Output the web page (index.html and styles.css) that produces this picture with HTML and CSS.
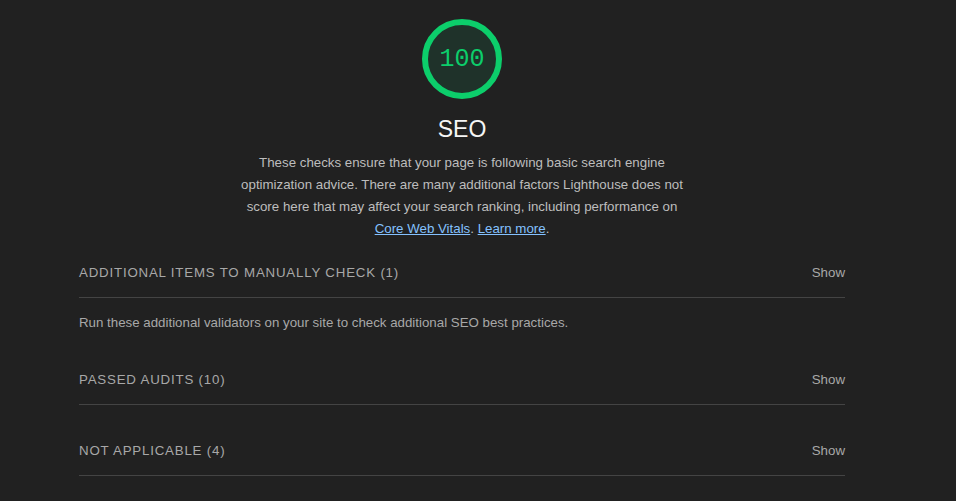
FILE: index.html
```html
<!DOCTYPE html>
<html>
<head>
<meta charset="utf-8">
<link rel="stylesheet" href="styles.css">
</head>
<body>
<div class="report">
  <div class="category-header">
    <div class="gauge">
      <svg class="gauge-svg" width="84" height="84" viewBox="0 0 84 84">
        <circle cx="42" cy="42" r="37" fill="#1f322a" stroke="#0cce6b" stroke-width="6"/>
      </svg>
      <div class="gauge-value">100</div>
    </div>
    <h1 class="category-title">SEO</h1>
    <p class="category-desc">These checks ensure that your page is following basic search engine optimization advice. There are many additional factors Lighthouse does not score here that may affect your search ranking, including performance on <a href="#">Core Web Vitals</a>. <a href="#">Learn more</a>.</p>
  </div>

  <div class="group group-manual">
    <div class="group-header">
      <span class="group-title">Additional items to manually check (1)</span>
      <span class="group-toggle">Show</span>
    </div>
    <p class="group-desc">Run these additional validators on your site to check additional SEO best practices.</p>
  </div>

  <div class="group group-passed">
    <div class="group-header">
      <span class="group-title">Passed audits (10)</span>
      <span class="group-toggle">Show</span>
    </div>
  </div>

  <div class="group group-na">
    <div class="group-header">
      <span class="group-title">Not applicable (4)</span>
      <span class="group-toggle">Show</span>
    </div>
  </div>
</div>
</body>
</html>
```

FILE: styles.css
```css
html, body {
  margin: 0;
  padding: 0;
  background: #212121;
  height: 100%;
}
body {
  font-family: "Liberation Sans", Arial, sans-serif;
  color: #bdbdbd;
}
.report {
  width: 766px;
  margin-left: 79px;
  padding-top: 17px;
}
.category-header {
  display: flex;
  flex-direction: column;
  align-items: center;
}
.gauge {
  position: relative;
  width: 84px;
  height: 84px;
}
.gauge-svg {
  display: block;
}
.gauge-value {
  position: absolute;
  inset: 0;
  display: flex;
  align-items: center;
  justify-content: center;
  font-family: "Liberation Mono", "DejaVu Sans Mono", monospace;
  font-size: 25px;
  color: #0cce6b;
}
.category-title {
  margin: 12px 0 0;
  font-size: 23px;
  font-weight: normal;
  line-height: 32px;
  color: #f5f5f5;
}
.category-desc {
  margin: 7px 0 0;
  width: 452px;
  text-align: center;
  font-size: 13.3px;
  line-height: 22px;
  color: #bdbdbd;
}
.category-desc a {
  color: #84c1ff;
}
.group-header {
  display: flex;
  justify-content: space-between;
  align-items: center;
  height: 50px;
  border-bottom: 1px solid #444444;
}
.group-manual .group-header {
  margin-top: 7px;
}
.group-passed .group-header {
  margin-top: 23px;
}
.group-na .group-header {
  margin-top: 20px;
}
.group-title {
  text-transform: uppercase;
  letter-spacing: 0.8px;
  font-size: 13.3px;
  color: #a8a8a8;
  padding-top: 1px;
}
.group-toggle {
  font-size: 13.3px;
  color: #a8a8a8;
}
.group-desc {
  margin: 17px 0 2px;
  font-size: 13.3px;
  line-height: 16px;
  color: #a8a8a8;
}
```
